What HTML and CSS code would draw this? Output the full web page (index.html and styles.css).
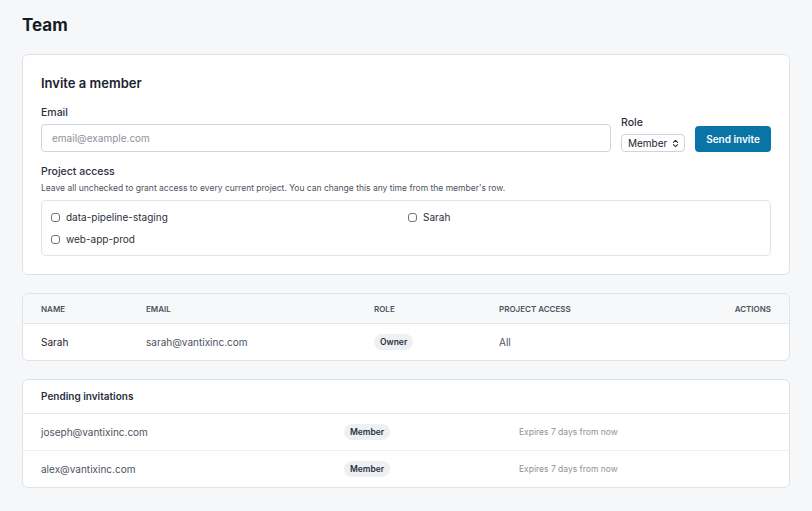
FILE: index.html
```html
<!DOCTYPE html>
<html lang="en">
<head>
<meta charset="UTF-8" />
<meta name="viewport" content="width=device-width, initial-scale=1" />
<title>Team</title>
<link rel="stylesheet" href="styles.css">
</head>
<body>
<main class="page">
  <h1 class="page-title">Team</h1>

  <section class="card invite">
    <h2 class="card-title">Invite a member</h2>
    <div class="invite-row">
      <label class="field field-email">
        <span class="field-label">Email</span>
        <input type="email" class="text-input" placeholder="email@example.com">
      </label>
      <label class="field field-role">
        <span class="field-label">Role</span>
        <span class="select-wrap">
          <select class="select">
            <option>Member</option>
            <option>Owner</option>
          </select>
          <svg class="select-icon" viewBox="0 0 10 12" width="7" height="9" aria-hidden="true">
            <path d="M2 4.5 L5 1.5 L8 4.5 M2 7.5 L5 10.5 L8 7.5" fill="none" stroke="#2b2f38" stroke-width="1.5" stroke-linecap="round" stroke-linejoin="round"/>
          </svg>
        </span>
      </label>
      <button class="btn-primary">Send invite</button>
    </div>

    <div class="field-label access-label">Project access</div>
    <p class="help">Leave all unchecked to grant access to every current project. You can change this any time from the member's row.</p>
    <div class="project-box">
      <label class="check"><input type="checkbox"> data-pipeline-staging</label>
      <label class="check"><input type="checkbox"> Sarah</label>
      <label class="check"><input type="checkbox"> web-app-prod</label>
    </div>
  </section>

  <section class="card members">
    <div class="members-row members-head">
      <span>Name</span>
      <span>Email</span>
      <span>Role</span>
      <span>Project access</span>
      <span class="right">Actions</span>
    </div>
    <div class="members-row">
      <span class="name">Sarah</span>
      <span class="muted">sarah@vantixinc.com</span>
      <span><span class="badge">Owner</span></span>
      <span class="muted">All</span>
      <span></span>
    </div>
  </section>

  <section class="card pending">
    <div class="pending-head">Pending invitations</div>
    <div class="pending-row">
      <span class="muted">joseph@vantixinc.com</span>
      <span><span class="badge">Member</span></span>
      <span class="expires">Expires 7 days from now</span>
    </div>
    <div class="pending-row">
      <span class="muted">alex@vantixinc.com</span>
      <span><span class="badge">Member</span></span>
      <span class="expires">Expires 7 days from now</span>
    </div>
  </section>
</main>
</body>
</html>
```

FILE: styles.css
```css
body {
  margin: 0;
  background: #f6f7f9;
  color: #1d2230;
  font-family: Inter, "Liberation Sans", sans-serif;
}
.page {
  padding: 13px 22px 24px;
}
.page-title {
  margin: 0 0 17px;
  font-size: 17px;
  line-height: 24px;
  font-weight: 700;
  color: #161b26;
}
.card {
  background: #fff;
  border: 1px solid #dfe2e7;
  border-radius: 6px;
  margin-bottom: 18px;
}
.invite {
  padding: 18px;
}
.card-title {
  margin: 0 0 12px;
  font-size: 13px;
  line-height: 20px;
  font-weight: 600;
}
.invite-row {
  display: flex;
  align-items: flex-end;
  gap: 10px;
}
.field {
  display: flex;
  flex-direction: column;
}
.field-email {
  flex: 1;
}
.field-label {
  font-size: 10.5px;
  line-height: 16px;
  font-weight: 500;
  color: #2b3040;
}
.field-email .field-label {
  margin-bottom: 3px;
}
.field-role .field-label {
  margin-bottom: 3px;
}
.text-input {
  height: 28px;
  box-sizing: border-box;
  border: 1px solid #cfd3da;
  border-radius: 4px;
  padding: 0 10px;
  font: inherit;
  font-size: 10px;
  color: #1d2230;
}
.text-input::placeholder {
  color: #8d929c;
}
.select-wrap {
  position: relative;
  display: block;
}
.select {
  display: block;
  appearance: none;
  -webkit-appearance: none;
  width: 64px;
  height: 18px;
  box-sizing: border-box;
  border: 1px solid #cfd3da;
  border-radius: 4px;
  background: #fff;
  padding: 0 0 0 6px;
  font: inherit;
  font-size: 10px;
  color: #1d2230;
}
.select-icon {
  position: absolute;
  right: 6px;
  top: 5px;
  pointer-events: none;
}
.btn-primary {
  height: 26px;
  width: 76px;
  border: none;
  border-radius: 4px;
  background: #0b74a6;
  color: #fff;
  font: inherit;
  font-size: 10px;
  font-weight: 600;
  cursor: pointer;
}
.access-label {
  margin-top: 12px;
}
.help {
  margin: 1px 0 5px;
  font-size: 8.5px;
  line-height: 14px;
  color: #4d5360;
}
.project-box {
  display: grid;
  grid-template-columns: 1fr 1fr;
  column-gap: 4px;
  padding: 5px 9px;
  border: 1px solid #dfe2e7;
  border-radius: 5px;
}
.check {
  display: flex;
  align-items: center;
  gap: 6px;
  height: 22px;
  font-size: 10px;
  color: #2b3040;
}
.check input {
  appearance: none;
  -webkit-appearance: none;
  margin: 0;
  width: 9px;
  height: 9px;
  border: 1px solid #6f7480;
  border-radius: 3px;
  background: #fff;
}
.members-row {
  display: grid;
  grid-template-columns: 105px 228px 125px 1fr auto;
  align-items: center;
  padding: 0 18px;
  height: 36px;
  font-size: 10px;
}
.members-head {
  height: 29px;
  background: #f7f8fa;
  border-bottom: 1px solid #e4e6ea;
  border-radius: 6px 6px 0 0;
  font-size: 8px;
  font-weight: 600;
  text-transform: uppercase;
  color: #4d5360;
}
.right {
  text-align: right;
}
.name {
  color: #1d2230;
}
.muted {
  color: #4d5360;
}
.badge {
  display: inline-block;
  padding: 0 6px;
  height: 16px;
  line-height: 16px;
  border-radius: 8px;
  background: #eef0f3;
  font-size: 8.5px;
  font-weight: 600;
  color: #2b3040;
}
.pending-head {
  height: 33px;
  line-height: 33px;
  padding: 0 18px;
  border-bottom: 1px solid #e4e6ea;
  font-size: 10px;
  font-weight: 600;
  color: #2b3040;
}
.pending-row {
  display: grid;
  grid-template-columns: 303px 175px 1fr;
  align-items: center;
  height: 36px;
  padding: 0 18px;
  font-size: 10px;
}
.pending-row + .pending-row {
  border-top: 1px solid #eceef1;
}
.expires {
  font-size: 8.5px;
  color: #8d929c;
}
```
